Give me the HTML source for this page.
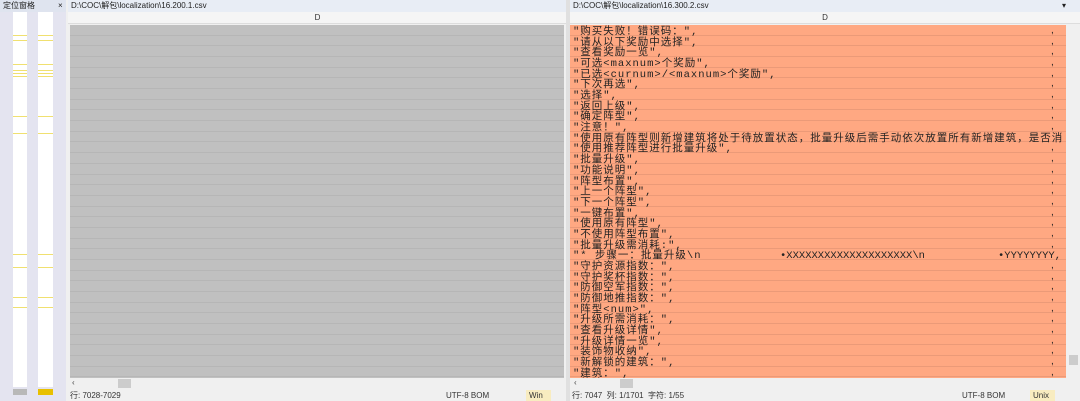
<!DOCTYPE html><html><head><meta charset="utf-8"><style>
*{margin:0;padding:0;box-sizing:border-box}
body{width:1080px;height:401px;overflow:hidden;background:#f0f0f0;font-family:"Liberation Sans","Noto Sans CJK SC",sans-serif;position:relative}
.a{position:absolute}
.lp{left:0;top:0;width:66px;height:401px;background:#e4e4f0}
.yl{position:absolute;height:1px;background:#f0e070}
.title{font-size:8px;color:#222;line-height:12px;background:#e8edf5;height:12px}
.hdr{background:#f5f5f5;height:12px;font-size:8px;line-height:12px;text-align:center;color:#333;border-bottom:1px solid #ddd}
.row{position:absolute;left:0;right:0;height:10.68px;border-bottom:1px solid}
.t{position:absolute;left:3px;top:2px;font-family:"Liberation Mono","Noto Sans CJK SC",monospace;font-size:10.5px;letter-spacing:1px;line-height:10px;color:#222;white-space:nowrap}
.c{position:absolute;left:481px;top:1px;font-size:10px;line-height:10px;color:#222}
.status{font-size:8px;color:#333;line-height:11px}
</style></head><body>
<div class="a lp">
 <div class="title" style="background:#dfe4ef;padding-left:3px">定位窗格<span style="position:absolute;left:58px">×</span></div>
 <div class="a" style="left:13px;top:12px;width:14px;height:375px;background:#fff"></div>
 <div class="a" style="left:38px;top:12px;width:15px;height:375px;background:#fff"></div>
 <div class="a" style="left:13px;top:389px;width:14px;height:6px;background:#b8b8b8"></div>
 <div class="a" style="left:38px;top:389px;width:15px;height:6px;background:#e8c000"></div>
</div>
<div id="yls"></div>
<div class="a" style="left:68px;top:0;width:499px;height:401px">
 <div class="title" style="padding-left:3px">D:\COC\解包\localization\16.200.1.csv</div>
 <div class="hdr">D</div>
 <div class="a" id="L" style="left:2px;top:25px;width:494px;height:353px;background:#c0c0c0;overflow:hidden"></div>
 <div class="a" style="left:0;top:378px;width:499px;height:11px;background:#f0f0f0;font-size:8px;color:#444;padding-left:4px">‹<div class="a" style="left:50px;top:1px;width:13px;height:9px;background:#ccc"></div></div>
 <div class="a status" style="top:390px;left:2px">行: 7028-7029</div>
 <div class="a status" style="top:390px;left:378px">UTF-8 BOM</div>
 <div class="a status" style="top:390px;left:458px;width:25px;background:#f8ecc0;padding-left:3px">Win</div>
</div>
<div class="a" style="left:566px;top:0;width:4px;height:401px;background:#e0e0e0"></div>
<div class="a" style="left:570px;top:0;width:510px;height:401px">
 <div class="title" style="padding-left:3px">D:\COC\解包\localization\16.300.2.csv<span style="position:absolute;left:492px">▾</span></div>
 <div class="hdr">D</div>
 <div class="a" id="R" style="left:0;top:25px;width:496px;height:353px;background:#ffa882;overflow:hidden"></div>
 <div class="a" style="left:498px;top:25px;width:12px;height:353px;background:#f0f0f0"><div class="a" style="left:1px;top:330px;width:9px;height:10px;background:#ccc"></div></div>
 <div class="a" style="left:0;top:378px;width:510px;height:11px;background:#f0f0f0;font-size:8px;color:#444;padding-left:4px">‹<div class="a" style="left:50px;top:1px;width:13px;height:9px;background:#ccc"></div></div>
 <div class="a status" style="top:390px;left:2px">行: 7047&nbsp; 列: 1/1701&nbsp; 字符: 1/55</div>
 <div class="a status" style="top:390px;left:392px">UTF-8 BOM</div>
 <div class="a status" style="top:390px;left:460px;width:25px;background:#f8ecc0;padding-left:3px">Unix</div>
</div>
<script>
var ys=[35,40,64,70,73,76,116,133,254,267,297,307],h='';
ys.forEach(function(y){h+='<div class="yl" style="left:13px;top:'+y+'px;width:14px"></div><div class="yl" style="left:38px;top:'+y+'px;width:15px"></div>'});
document.getElementById('yls').innerHTML=h;
var rows=['"购买失败！错误码：",','"请从以下奖励中选择",','"查看奖励一览",','"可选<maxnum>个奖励",','"已选<curnum>/<maxnum>个奖励",','"下次再选",','"选择",','"返回上级",','"确定阵型",','"注意！",','"使用原有阵型则新增建筑将处于待放置状态，批量升级后需手动依次放置所有新增建筑，是否消','"使用推荐阵型进行批量升级",','"批量升级",','"功能说明",','"阵型布置",','"上一个阵型",','"下一个阵型",','"一键布置",','"使用原有阵型",','"不使用阵型布置",','"批量升级需消耗:",','STEP','"守护资源指数：",','"守护奖杯指数：",','"防御空军指数：",','"防御地推指数：",','"阵型<num>",','"升级所需消耗：",','"查看升级详情",','"升级详情一览",','"装饰物收纳",','"新解锁的建筑：",','"建筑：",','"移除："'];
var L='',R='';
for(var i=0;i<rows.length;i++){var t=(i*10.68).toFixed(2);
L+='<div class="row" style="top:'+t+'px;border-color:#b6b6b6"></div>';
var s=rows[i]==='STEP'?'<span class="t">"*  步骤一：批量升级\\n</span><span class="t" style="left:210px;letter-spacing:0">•XXXXXXXXXXXXXXXXXXXX\\n</span><span class="t" style="left:428px;letter-spacing:0">•YYYYYYYY,</span>':'<span class="t">'+rows[i].replace(/</g,'&lt;')+'</span>'+(i==10?'':'<span class="c">,</span>');
R+='<div class="row" style="top:'+t+'px;border-color:#eb9a78">'+s+'</div>';}
document.getElementById('L').innerHTML=L;document.getElementById('R').innerHTML=R;
</script>
</body></html>
